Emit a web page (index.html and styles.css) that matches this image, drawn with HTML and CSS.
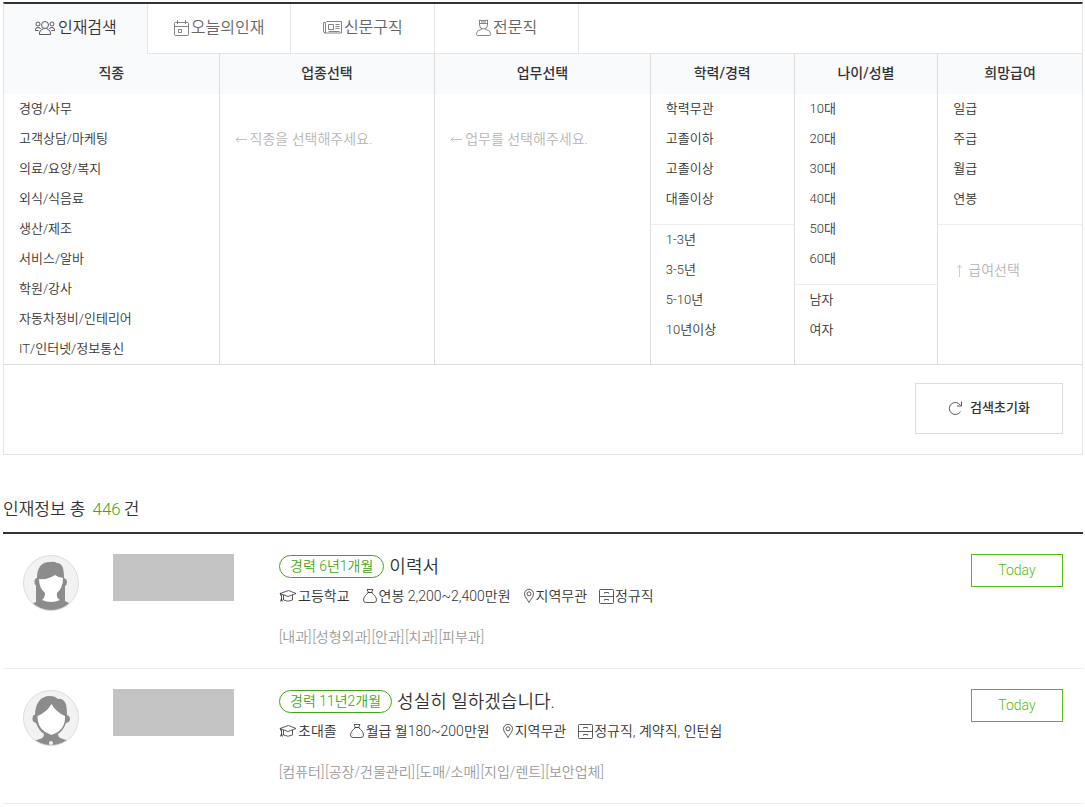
FILE: index.html
```html
<!DOCTYPE html>
<html lang="ko">
<head>
<meta charset="utf-8">
<meta name="viewport" content="width=device-width, initial-scale=1">
<title>인재검색</title>
<link rel="stylesheet" href="styles.css">
</head>
<body>
<svg class="defs" aria-hidden="true">
  <symbol id="i-cap" viewBox="0 0 18 14"><path d="M1 4.5 9.5 1.5 17 4.5 9 7.5ZM1 4.5l1.5 3M2.500 5.500v6.500M1.500 12.500l1-3 1 3M4.500 6v5q4.500 2.500 9 0V6"/></symbol>
  <symbol id="i-bag" viewBox="0 0 16 16"><path d="M5 1.500h6L9.500 4.500h-3ZM5.500 4.500h5M6 5C3.500 7 1.500 9.500 1.500 12q0 2.500 2.500 2.500h8q2.500 0 2.500-2.500C14.500 9.500 12.500 7 10 5"/></symbol>
  <symbol id="i-pin" viewBox="0 0 12 16"><path d="M6 14.500C4.500 11.500 1.500 9 1.500 5.800a4.500 4.500 0 0 1 9 0C10.500 9 7.500 11.500 6 14.500Z"/><circle cx="6" cy="5.800" r="2"/></symbol>
  <symbol id="i-drawer" viewBox="0 0 15 15"><path d="M1.500.5h12q1 0 1 1v12q0 1-1 1h-12q-1 0-1-1v-12q0-1 1-1ZM.5 7.500h14M5.500 4.500v-1h4v1M5.500 11.500v-1h4v1"/></symbol>
</svg>
<main class="page">
  <section class="finder">
    <nav class="tabs">
      <button class="tab tab-on" type="button">
        <svg class="icon" width="22" height="16" viewBox="0 0 22 16"><circle cx="11" cy="5" r="3.500"/><path d="M5.500 14.500v-1.500q0-2.500 2.500-3.500l1.500-.8M16.500 14.500v-1.500q0-2.500-2.500-3.500l-1.500-.8M5.500 14.500h11"/><circle cx="4" cy="4" r="2"/><circle cx="18" cy="4" r="2"/><path d="M1.500 10.500V9.500Q1.500 7.500 4 7.500t2.500 1.500M20.500 10.500V9.500Q20.500 7.500 18 7.500t-2.500 1.500M1.500 10.500h3M17.500 10.500h3"/></svg>
        <span>인재검색</span>
      </button>
      <button class="tab" type="button">
        <svg class="icon" width="15" height="16" viewBox="0 0 15 16"><path d="M1.500 2.500h12q1 0 1 1v11q0 1-1 1h-12q-1 0-1-1v-11q0-1 1-1ZM.5 6.500h14M3.500 0v4M11.500 0v4M4.500 9.500h3v3h-3Z"/></svg>
        <span>오늘의인재</span>
      </button>
      <button class="tab" type="button">
        <svg class="icon" width="19" height="13" viewBox="0 0 19 13"><path d="M3.500.5h15v11.500h-16q-2 0-2-2v-8.500h2v9.500q0 1-1 1M5.500 3.500h5v5h-5ZM12.500 3.500h4M12.500 5.500h4M12.500 7.500h4M5.500 10.500h11"/></svg>
        <span>신문구직</span>
      </button>
      <button class="tab" type="button">
        <svg class="icon" width="15" height="17" viewBox="0 0 15 17"><path d="M3.500 1l1.500.5h5L11.500 1v5q0 4-4 4t-4-4ZM3.500 4.500h8M5 3h5M5.500 9.500v1l-3 1Q.5 12 .5 15.500q0 1 1 1h12q1 0 1-1Q14.500 12 12.500 11.500l-3-1v-1"/></svg>
        <span>전문직</span>
      </button>
    </nav>
    <div class="columns">
      <section class="column">
        <h2 class="column-title">직종</h2>
        <ul class="options">
          <li><a href="#">경영/사무</a></li><li><a href="#">고객상담/마케팅</a></li><li><a href="#">의료/요양/복지</a></li><li><a href="#">외식/식음료</a></li><li><a href="#">생산/제조</a></li><li><a href="#">서비스/알바</a></li><li><a href="#">학원/강사</a></li><li><a href="#">자동차정비/인테리어</a></li><li><a href="#">IT/인터넷/정보통신</a></li>
        </ul>
      </section>
      <section class="column">
        <h2 class="column-title">업종선택</h2>
        <p class="hint"><svg class="icon" width="12" height="9" viewBox="0 0 12 9"><path d="M12 4.500H1M4 2 1 4.500 4 7"/></svg>직종을 선택해주세요.</p>
      </section>
      <section class="column">
        <h2 class="column-title">업무선택</h2>
        <p class="hint"><svg class="icon" width="12" height="9" viewBox="0 0 12 9"><path d="M12 4.500H1M4 2 1 4.500 4 7"/></svg>업무를 선택해주세요.</p>
      </section>
      <section class="column">
        <h2 class="column-title">학력/경력</h2>
        <ul class="options options-split">
          <li><a href="#">학력무관</a></li><li><a href="#">고졸이하</a></li><li><a href="#">고졸이상</a></li><li><a href="#">대졸이상</a></li>
        </ul>
        <ul class="options">
          <li><a href="#">1-3년</a></li><li><a href="#">3-5년</a></li><li><a href="#">5-10년</a></li><li><a href="#">10년이상</a></li>
        </ul>
      </section>
      <section class="column">
        <h2 class="column-title">나이/성별</h2>
        <ul class="options options-split">
          <li><a href="#">10대</a></li><li><a href="#">20대</a></li><li><a href="#">30대</a></li><li><a href="#">40대</a></li><li><a href="#">50대</a></li><li><a href="#">60대</a></li>
        </ul>
        <ul class="options">
          <li><a href="#">남자</a></li><li><a href="#">여자</a></li>
        </ul>
      </section>
      <section class="column">
        <h2 class="column-title">희망급여</h2>
        <ul class="options options-split">
          <li><a href="#">일급</a></li><li><a href="#">주급</a></li><li><a href="#">월급</a></li><li><a href="#">연봉</a></li>
        </ul>
        <p class="hint"><svg class="icon icon-up" width="12" height="13" viewBox="0 0 12 13"><path d="M6.500 13V1M4 4l2.500-3L9 4"/></svg>급여선택</p>
      </section>
    </div>
    <div class="actions">
      <button class="reset" type="button">
        <svg class="icon" width="15" height="15" viewBox="0 0 15 15"><path d="M12.500 10.500A6 6 0 1 1 12.500 4.500M13.500.5v4.500H9"/></svg>
        <span>검색초기화</span>
      </button>
    </div>
  </section>

  <section class="results">
    <h1 class="results-title">인재정보 총 <strong class="total">446</strong>건</h1>
    <ul class="people">
      <li class="person">
        <svg class="avatar" viewBox="0 0 56 56" role="img" aria-label="여성">
          <defs><clipPath id="round"><circle cx="28" cy="28" r="27.500"/></clipPath></defs>
          <circle cx="28" cy="28" r="27.500" fill="#f2f2f2"/>
          <g clip-path="url(#round)">
            <path fill="#8c8c8c" d="M13 47C13 43 13 35 13 30.500Q11 29 11.500 26T14 23C14 13 18 7 27 7Q31 6 34 8Q38 8 40 13Q41 17 41 23Q44 24 44 27T42 31C42 38 42 43 42 46L50 50V56H6V50Z"/>
            <path fill="#fff" d="M16 24Q25 25 32 20Q36 23 40 23Q40 33 34 38Q33 43 37 45Q28 49 19 45Q22 43 22 38Q16 33 16 24Z"/>
          </g>
          <circle cx="28" cy="28" r="27.500" fill="none" stroke="#dcdcdc"/>
        </svg>
        <div class="mask"></div>
        <div class="summary">
          <div class="headline"><span class="career">경력 6년1개월</span><a class="title" href="#">이력서</a></div>
          <ul class="facts">
            <li><svg class="icon" width="18" height="14"><use href="#i-cap"/></svg>고등학교</li>
            <li><svg class="icon" width="16" height="16"><use href="#i-bag"/></svg>연봉 2,200~2,400만원</li>
            <li><svg class="icon" width="12" height="16"><use href="#i-pin"/></svg>지역무관</li>
            <li><svg class="icon" width="15" height="15"><use href="#i-drawer"/></svg>정규직</li>
          </ul>
          <p class="fields"><span>[내과]</span><span>[성형외과]</span><span>[안과]</span><span>[치과]</span><span>[피부과]</span></p>
        </div>
        <button class="today" type="button">Today</button>
      </li>
      <li class="person">
        <svg class="avatar" viewBox="0 0 56 56" role="img" aria-label="남성">
          <circle cx="28" cy="28" r="27.500" fill="#f2f2f2"/>
          <g clip-path="url(#round)">
            <path fill="#8c8c8c" d="M12 25C12 14 17 6 27 6Q32 6 35 9Q40 8 43 14Q44 19 44 25Q47 26 47 29T43 33Q40 41 35 44Q35 48 40 49L46 51V56H10V51L17 49Q21 48 21 44Q16 41 13 33Q9 32 9.500 28T12 25Z"/>
            <path fill="#fff" d="M14.500 26Q24 22 28.500 14Q33 22 42 26Q43 40 28.500 45Q14 40 14.500 26Z"/>
            <circle cx="28" cy="53" r="2" fill="#f2f2f2"/>
          </g>
          <circle cx="28" cy="28" r="27.500" fill="none" stroke="#dcdcdc"/>
        </svg>
        <div class="mask"></div>
        <div class="summary">
          <div class="headline"><span class="career">경력 11년2개월</span><a class="title" href="#">성실히 일하겠습니다.</a></div>
          <ul class="facts">
            <li><svg class="icon" width="18" height="14"><use href="#i-cap"/></svg>초대졸</li>
            <li><svg class="icon" width="16" height="16"><use href="#i-bag"/></svg>월급 월180~200만원</li>
            <li><svg class="icon" width="12" height="16"><use href="#i-pin"/></svg>지역무관</li>
            <li><svg class="icon" width="15" height="15"><use href="#i-drawer"/></svg>정규직, 계약직, 인턴쉽</li>
          </ul>
          <p class="fields"><span>[컴퓨터]</span><span>[공장/건물관리]</span><span>[도매/소매]</span><span>[지입/렌트]</span><span>[보안업체]</span></p>
        </div>
        <button class="today" type="button">Today</button>
      </li>
    </ul>
  </section>
</main>
</body>
</html>
```
FILE: styles.css
```css
* { box-sizing: border-box; }
body {
  margin: 0;
  background: #fff;
  color: #333;
  font: 350 14px/20px Roboto, "Noto Sans CJK KR", sans-serif;
}
h1, h2, p, ul { margin: 0; padding: 0; }
ul { list-style: none; }
a { color: inherit; text-decoration: none; }
button { font: inherit; color: inherit; background: #fff; cursor: pointer; }
.defs { display: none; }
.icon { flex: none; fill: none; stroke: currentColor; stroke-opacity: .8; }
.page { padding: 2px 2px 0 3px; }

.finder { border: 1px solid #e3e5e6; border-top: 2px solid #333; }
.tabs { display: grid; grid-template-columns: repeat(4, 2fr) 7fr; }
.tabs::after { content: ""; border-bottom: 1px solid #e5e5e5; }
.tab {
  display: flex;
  align-items: center;
  justify-content: center;
  gap: 2px;
  height: 50px;
  padding: 0 0 2px;
  border: 0;
  border-right: 1px solid #e5e5e5;
  border-bottom: 1px solid #e5e5e5;
  color: #666;
  font-size: 16px;
}
.tab-on { background: #f9fafc; border-bottom-color: #f9fafc; color: #333; }

.columns {
  display: grid;
  grid-template-columns: repeat(3, 3fr) repeat(3, 2fr);
  border-bottom: 1px solid #ddd;
}
.column { border-right: 1px solid #ddd; }
.column:last-child { border-right: 0; }
.column-title {
  height: 40px;
  background: #f9fafc;
  font-size: 14px;
  font-weight: 500;
  line-height: 38px;
  text-align: center;
}
.options { font-size: 13px; line-height: 29px; }
.options li { height: 30px; padding: 0 15px; }
.options a { display: block; }
.options-split { padding-bottom: 10px; border-bottom: 1px solid #eee; }
.hint { display: flex; align-items: center; gap: 3px; padding: 35px 15px; color: #b5b5b5; }
.icon-up { color: #e8b79a; }

.actions { display: flex; justify-content: flex-end; padding: 18px 19px 20px; }
.reset {
  display: flex;
  align-items: center;
  justify-content: center;
  gap: 7px;
  width: 148px;
  height: 51px;
  padding-bottom: 2px;
  border: 1px solid #ddd;
  font-size: 13px;
  font-weight: 500;
}

.results { padding-top: 40px; }
.results-title {
  padding-bottom: 9px;
  border-bottom: 2px solid #333;
  font-size: 17px;
  font-weight: 350;
  line-height: 28px;
}
.total { padding: 0 3px; color: #42a517; font-weight: 350; }
.person {
  display: grid;
  grid-template-columns: 56px 121px 1fr 92px;
  align-items: start;
  column-gap: 34px;
  padding: 20px 20px 21px;
  border-bottom: 1px solid #eee;
}
.avatar { width: 56px; height: 56px; margin-top: 1px; }
.mask { height: 47px; background: #c3c3c3; }
.summary { padding-left: 11px; }
.headline { display: flex; align-items: center; gap: 5px; height: 25px; }
.career {
  padding: 0 10px;
  border: 1px solid #42a517;
  border-radius: 12px;
  color: #42a517;
  line-height: 21px;
}
.title { font-size: 18px; line-height: 25px; }
.facts { display: flex; gap: 12px; margin-top: 7px; }
.facts li { display: flex; align-items: center; gap: 1px; }
.fields { display: flex; gap: 1px; margin-top: 21px; color: #999; }
.today { height: 33px; padding-bottom: 2px; border: 1px solid #5b1; color: #5b1; }
```
